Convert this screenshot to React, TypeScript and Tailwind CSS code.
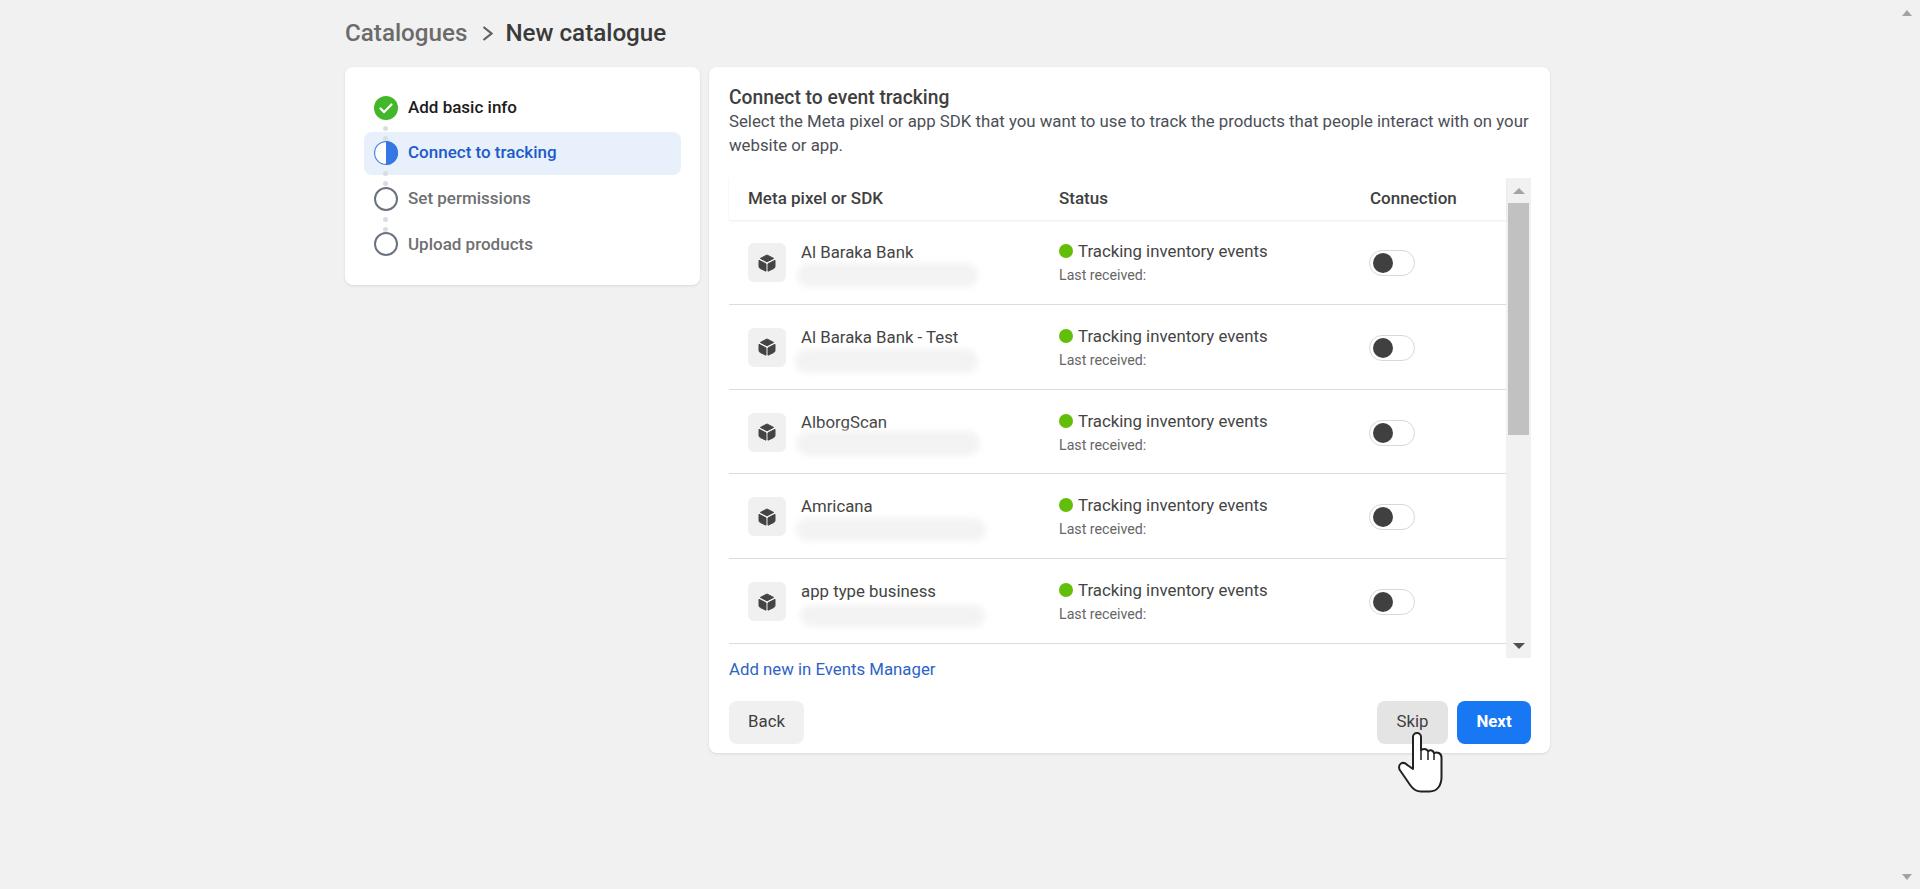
import { FC } from "react";

interface Pixel {
  name: string;
  smudge: string;
}

const pixels: Pixel[] = [
  { name: "Al Baraka Bank", smudge: "ml-[-4px] mt-[1px] h-[24px] w-[181px]" },
  { name: "Al Baraka Bank - Test", smudge: "ml-[-6px] mt-[2px] h-[24px] w-[183px]" },
  { name: "AlborgScan", smudge: "ml-[-5px] mt-[-1px] h-[25px] w-[184px]" },
  { name: "Amricana", smudge: "ml-[-5px] mt-[2px] h-[23px] w-[190px]" },
  { name: "app type business", smudge: "ml-[-1px] mt-[4px] h-[22px] w-[185px]" },
];

const steps = [
  { label: "Add basic info", state: "done" },
  { label: "Connect to tracking", state: "active" },
  { label: "Set permissions", state: "todo" },
  { label: "Upload products", state: "todo" },
];

const StepIcon: FC<{ state: string }> = ({ state }) => {
  if (state === "done") {
    return (
      <svg viewBox="0 0 24 24" className="h-6 w-6 shrink-0">
        <circle cx="12" cy="12" r="12" fill="#42b72a" />
        <path d="M6.5 12.5l3.6 3.6 7.4-7.6" fill="none" stroke="#fff" strokeWidth="2.2" strokeLinecap="round" strokeLinejoin="round" />
      </svg>
    );
  }
  if (state === "active") {
    return (
      <svg viewBox="0 0 24 24" className="h-6 w-6 shrink-0">
        <circle cx="12" cy="12" r="11.4" fill="#fff" stroke="#4a86e8" strokeWidth="1.2" />
        <path d="M12 0a12 12 0 0 1 0 24z" fill="#3578e5" />
      </svg>
    );
  }
  return (
    <svg viewBox="0 0 24 24" className="h-6 w-6 shrink-0">
      <circle cx="12" cy="12" r="11" fill="#fff" stroke="#6b7280" strokeWidth="2" />
    </svg>
  );
};

const CubeIcon: FC = () => (
  <svg viewBox="0 0 18 18" className="h-[18px] w-[18px]" fill="#444" stroke="#444" strokeWidth="1" strokeLinejoin="round">
    <path d="M9 1l6.6 3.4L9 7.8 2.4 4.4z" />
    <path d="M1 6.3l7 3.6v7.3l-5.6-2.6C1.5 14.2 1 13.4 1 12.5z" />
    <path d="M17 6.3l-7 3.6v7.3l5.6-2.6c.9-.4 1.4-1.2 1.4-2.1z" />
  </svg>
);

const Dots: FC = () => (
  <div className="absolute left-[19px] top-[-6px] z-10 flex flex-col gap-[5px]">
    <span className="h-[5px] w-[5px] rounded-full bg-[#dadde1]" />
    <span className="h-[5px] w-[5px] rounded-full bg-[#dadde1]" />
  </div>
);

const Row: FC<{ pixel: Pixel }> = ({ pixel }) => (
  <div className="flex h-[84.75px] border-b border-[#dcdcdc] pt-[23px]">
    <div className="flex w-[330px] pl-[19px]">
      <div className="flex h-[39px] w-[38px] items-center justify-center rounded-md bg-[#f0f0f0]">
        <CubeIcon />
      </div>
      <div className="ml-[15px] flex flex-col">
        <div className="mt-[-1px] text-[16.8px] leading-5 text-[#444]">{pixel.name}</div>
        <div className={`${pixel.smudge} rounded-full bg-[#f3f3f3] blur-[3px]`} />
      </div>
    </div>
    <div className="w-[311px]">
      <div className="mt-[-2px] flex items-center gap-[5px] text-[16.8px] leading-5 text-[#444]">
        <span className="h-[14px] w-[14px] rounded-full bg-[#63be09]" />
        Tracking inventory events
      </div>
      <div className="mt-[5px] text-[14.2px] leading-[18px] text-[#666]">Last received:</div>
    </div>
    <div className="ml-[-1px] mt-[7px] flex h-[26px] w-[46px] items-center rounded-full border border-[#d8d8d8] bg-white pl-[3px]">
      <span className="h-5 w-5 rounded-full bg-[#404040]" />
    </div>
  </div>
);

const App: FC = () => {
  return (
    <div className="relative h-screen overflow-hidden bg-[#f1f1f1] font-['Roboto',sans-serif]">
      <div className="flex h-[67px] items-center pl-[345px] text-[24.2px] font-medium">
        <span className="text-[#6b6b6b]">Catalogues</span>
        <svg viewBox="0 0 11 15" className="ml-[15px] mr-[12px] h-[15px] w-[11px] text-[#606060]" fill="none" stroke="currentColor" strokeWidth="2.2">
          <path d="M1.5 1l8 6.5-8 6.5" />
        </svg>
        <span className="text-[#3a3a3a]">New catalogue</span>
      </div>

      <div className="ml-[345px] flex items-start gap-[9px]">
        <div className="h-[218px] w-[355px] rounded-lg bg-white px-[19px] pt-[19px] shadow-[0_1px_3px_rgba(0,0,0,0.1)]">
          <div className="flex flex-col gap-[2.67px]">
            {steps.map((step, index) => (
              <div
                key={step.label}
                className={`relative flex h-[43px] items-center gap-[10px] rounded-lg pl-[10px] text-[17px] font-medium ${
                  step.state === "active" ? "bg-[#e7f0fb] text-[#1d5bc9]" : step.state === "done" ? "text-[#1c1c1c]" : "text-[#6f7072]"
                }`}
              >
                {index > 0 && <Dots />}
                <StepIcon state={step.state} />
                {step.label}
              </div>
            ))}
          </div>
        </div>

        <div className="h-[686px] w-[841px] rounded-lg bg-white pl-5 pr-[19px] pt-5 shadow-[0_1px_3px_rgba(0,0,0,0.1)]">
          <div className="text-[19.3px] font-medium leading-[22px] text-[#3f3f3f]">Connect to event tracking</div>
          <p className="text-[16.8px] leading-6 text-[#4b4f56]">
            Select the Meta pixel or app SDK that you want to use to track the products that people interact with on your website or app.
          </p>

          <div className="mt-[21px] flex h-[480px]">
            <div className="w-[777px]">
              <div className="relative z-10 flex h-[42px] items-center text-[17px] font-medium text-[#3f3f3f] shadow-[0_1px_2px_rgba(0,0,0,0.08)]">
                <div className="w-[330px] pl-[19px]">Meta pixel or SDK</div>
                <div className="w-[311px]">Status</div>
                <div>Connection</div>
              </div>
              <div className="h-[438px] overflow-hidden">
                {pixels.map((pixel) => (
                  <Row key={pixel.name} pixel={pixel} />
                ))}
              </div>
            </div>
            <div className="flex w-[25px] flex-col items-center bg-[#f1f1f1]">
              <div className="flex h-[25px] items-center justify-center">
                <span className="h-0 w-0 border-x-[6px] border-b-[6px] border-x-transparent border-b-[#a3a3a3]" />
              </div>
              <div className="h-[232px] w-[21px] bg-[#c1c1c1]" />
              <div className="mt-auto flex h-[25px] items-center justify-center">
                <span className="h-0 w-0 border-x-[6px] border-t-[6px] border-x-transparent border-t-[#505050]" />
              </div>
            </div>
          </div>

          <div className="text-[16.8px] leading-[22px] text-[#2d63c8]">Add new in Events Manager</div>

          <div className="mt-[21px] flex items-center text-[16.8px]">
            <button className="h-[43px] w-[75px] rounded-lg bg-[#f0f0f0] pb-px text-[#3f3f3f]">Back</button>
            <button className="ml-auto h-[43px] w-[71px] rounded-lg bg-[#e4e4e4] pb-px text-[#3f3f3f]">Skip</button>
            <button className="ml-[9px] h-[43px] w-[74px] rounded-lg bg-[#1877f2] pb-px font-bold text-white">Next</button>
          </div>
        </div>
      </div>

      {/* page scrollbar arrows */}
      <span className="absolute left-[1902px] top-[10px] h-0 w-0 border-x-[5.5px] border-b-[6px] border-x-transparent border-b-[#a3a3a3]" />
      <span className="absolute left-[1902px] top-[874px] h-0 w-0 border-x-[5.5px] border-t-[6px] border-x-transparent border-t-[#a3a3a3]" />

      {/* mouse pointer */}
      <svg viewBox="0 0 60 70" className="pointer-events-none absolute left-[1390px] top-[725px] h-[70px] w-[60px]">
        <path
          d="M23 44V12a4 4 0 0 1 8 0V25c3-1.5 5.5-1 7 1c3-1.5 5-.5 6 2c3-1.5 7.5 0 7.5 4.5V52c0 8-4 14.5-12 14.5H31c-5 0-8-2.5-10.5-6L10.5 46c-2-2.5-2-6 .5-7.5c2.5-1.5 4.5-.5 7 2z"
          fill="#fff"
          stroke="#222"
          strokeWidth="2"
          strokeLinejoin="round"
        />
        <path d="M31 25v10M38 26v9M44 28v7" fill="none" stroke="#222" strokeWidth="1.5" />
      </svg>
    </div>
  );
};

export default App;
